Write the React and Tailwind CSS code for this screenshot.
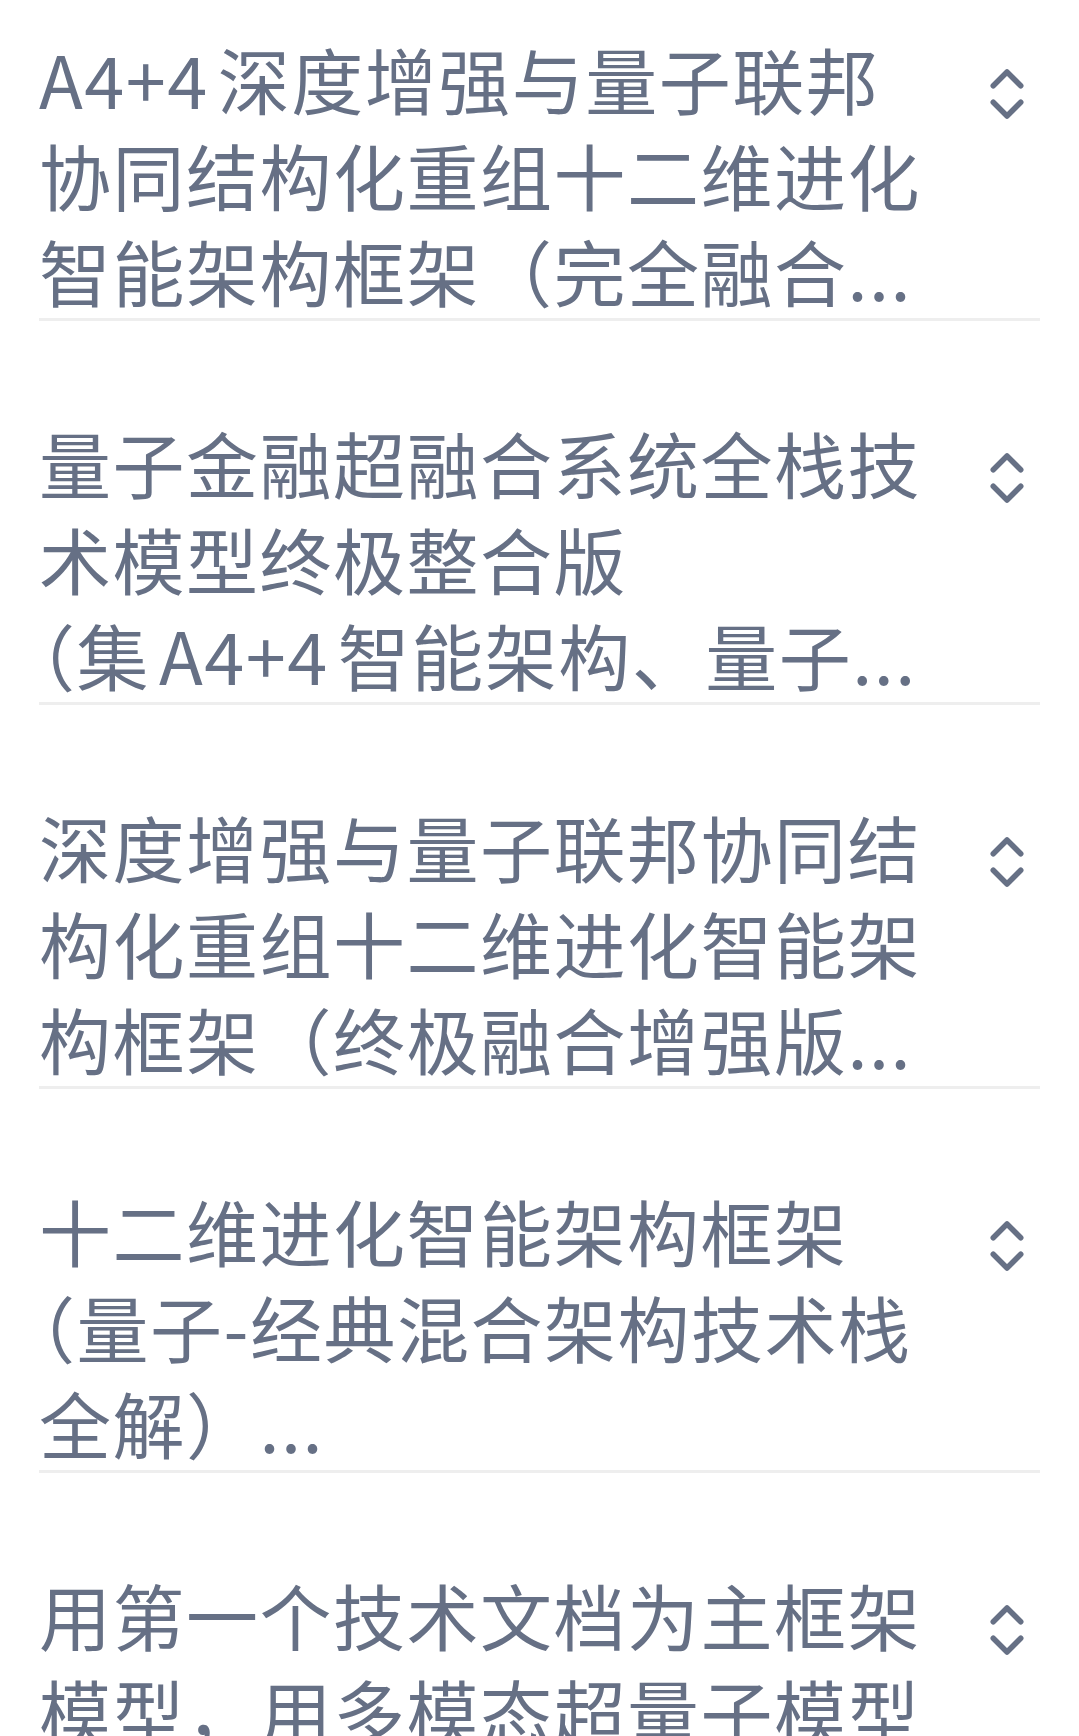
import { ChevronsUpDown } from "lucide-react";

// a line is a string, or a list of parts: { t, cls } for spans needing a nudge
const ITEMS = [
  {
    id: "a4",
    lines: [
      [{ t: "A4+4", cls: "mr-[9px]" }, { t: "深度增强与量子联邦" }],
      "协同结构化重组十二维进化",
      "智能架构框架（完全融合...",
    ],
  },
  {
    id: "quant-fin",
    lines: [
      "量子金融超融合系统全栈技",
      "术模型终极整合版",
      [{ t: "（", cls: "-ml-[36px]" }, { t: "集" }, { t: "A4+4", cls: "mx-[9px]" }, { t: "智能架构、量子..." }],
    ],
  },
  {
    id: "deep",
    lines: ["深度增强与量子联邦协同结", "构化重组十二维进化智能架", "构框架（终极融合增强版..."],
  },
  {
    id: "twelve",
    lines: ["十二维进化智能架构框架", [{ t: "（", cls: "-ml-[36px]" }, { t: "量子-经典混合架构技术栈" }], "全解）..."],
  },
  {
    id: "first-doc",
    lines: ["用第一个技术文档为主框架", "模型，用多模态超量子模型", "融合..."],
  },
];

function TitleLine({ line }) {
  if (Array.isArray(line)) {
    return (
      <span className="block whitespace-nowrap">
        {line.map((part, i) => (
          <span key={i} className={part.cls}>
            {part.t}
          </span>
        ))}
      </span>
    );
  }
  return <span className="block whitespace-nowrap">{line}</span>;
}

function DocRow({ item, first }) {
  return (
    <div
      className={`flex items-start border-b-[3px] border-[#eeeeee] ${first ? "pt-[30px]" : "pt-[93px]"}`}
    >
      <div className="min-w-0 flex-1 h-[288px] text-[72px] leading-[96px] tracking-[1.5px] text-[#667085]">
        {item.lines.map((line, i) => (
          <TitleLine key={i} line={line} />
        ))}
      </div>
      <ChevronsUpDown
        size={66}
        strokeWidth={2}
        className="mt-[31px] shrink-0 text-[#667085]"
      />
    </div>
  );
}

export default function App() {
  return (
    <div className="h-[1736px] overflow-hidden bg-white px-[39px] font-['Noto_Sans_CJK_SC','Noto_Sans',sans-serif]">
      {ITEMS.map((item, i) => (
        <DocRow key={item.id} item={item} first={i === 0} />
      ))}
    </div>
  );
}
